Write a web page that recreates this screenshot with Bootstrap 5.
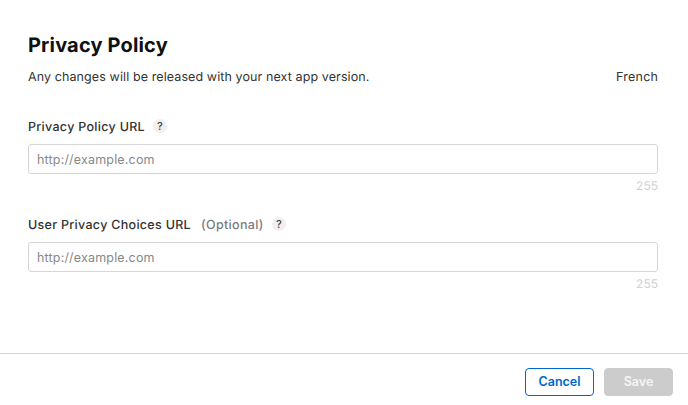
<!DOCTYPE html>
<html lang="en">
<head>
<meta charset="utf-8">
<meta name="viewport" content="width=device-width, initial-scale=1">
<title>Privacy Policy</title>
<link href="https://cdn.jsdelivr.net/npm/bootstrap@5.3.0/dist/css/bootstrap.min.css" rel="stylesheet">
<style>
body{font-family:Inter,"Liberation Sans",sans-serif;font-size:12.5px;line-height:20px;color:#333;background:#fff;height:405px;overflow:hidden;text-rendering:geometricPrecision}
.dialog-body{padding:32px 30px 0 28px;height:353px}
.dialog-title{font-size:20px;line-height:26px;font-weight:700;color:#111;letter-spacing:.16px;margin:0 0 8px}
.intro{height:20px;line-height:23px;margin-bottom:30px;letter-spacing:.1px}
.language{letter-spacing:.25px;margin-right:-.25px}
.field{height:98px}
.label-row{height:20px}
.field-label,.optional{font-weight:500;line-height:20px;letter-spacing:.3px;margin:0;padding-top:4px}
.optional{color:#7c7c7c;margin-left:10px;letter-spacing:.35px}
.help{width:14px;height:14px;border-radius:50%;background:#f0f0f0;color:#444;font-size:11px;font-weight:500;line-height:14px;margin-left:8px}
.field .form-control{height:30px;margin-top:8px;padding:0 8px;border:1px solid #d6d6d6;border-radius:3px;font-size:12.5px;letter-spacing:.18px;box-shadow:none}
.field .form-control::placeholder{color:#888;opacity:1}
.counter{color:#d2d2d2;font-size:12px;line-height:21px;margin-top:1px}
.dialog-footer{height:52px;border-top:1px solid #d6d6d6;padding:14px 15px 0;gap:10px}
.dialog-footer .btn{height:28px;padding:0;font-size:12.5px;font-weight:600;line-height:26px;border-radius:4px}
.dialog-footer .btn-cancel{width:69px;color:#0066cc;border:1px solid #0066cc}
.dialog-footer .btn-save{width:69px;background:#ccc;color:#f5f5f5;border:1px solid #ccc;opacity:1}
</style>
<script src="https://cdn.jsdelivr.net/npm/bootstrap@5.3.0/dist/js/bootstrap.bundle.min.js"></script>
</head>
<body>
<main class="dialog-body">
<h1 class="dialog-title">Privacy Policy</h1>
<div class="intro d-flex justify-content-between"><span>Any changes will be released with your next app version.</span><span class="language">French</span></div>
<div class="field">
<div class="label-row d-flex align-items-center"><label class="field-label" for="policy">Privacy Policy URL</label><span class="help text-center">?</span></div>
<input id="policy" class="form-control" type="text" placeholder="http://example.com">
<div class="counter text-end">255</div>
</div>
<div class="field">
<div class="label-row d-flex align-items-center"><label class="field-label" for="choices">User Privacy Choices URL</label><span class="optional">(Optional)</span><span class="help text-center">?</span></div>
<input id="choices" class="form-control" type="text" placeholder="http://example.com">
<div class="counter text-end">255</div>
</div>
</main>
<footer class="dialog-footer d-flex justify-content-end align-items-start">
<button type="button" class="btn btn-cancel">Cancel</button>
<button type="button" class="btn btn-save" disabled>Save</button>
</footer>
</body>
</html>
